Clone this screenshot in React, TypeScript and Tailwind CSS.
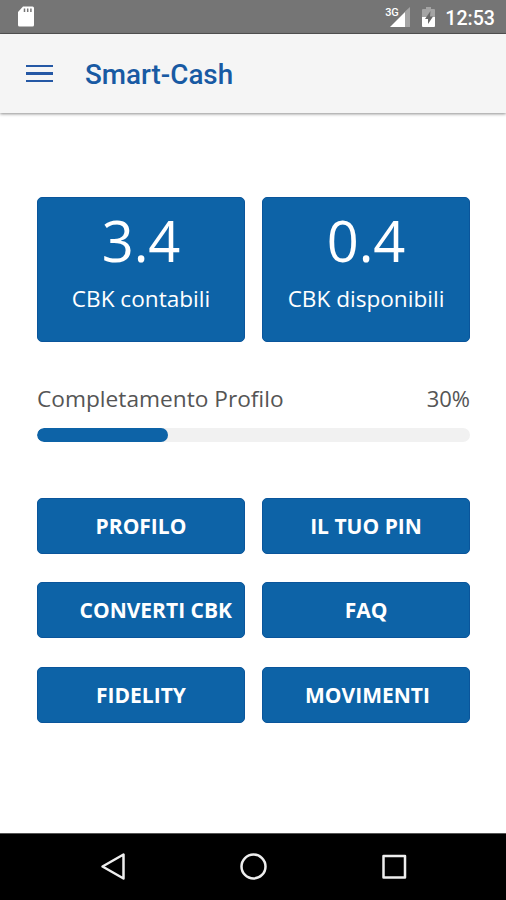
interface BalanceCardProps {
  value: string;
  label: string;
}

const BALANCES = [
  { value: '3.4', label: 'CBK contabili' },
  { value: '0.4', label: 'CBK disponibili' },
];

const ACTIONS = [
  { label: 'PROFILO', align: 'justify-center' },
  { label: 'IL TUO PIN', align: 'justify-center' },
  { label: 'CONVERTI CBK', align: 'justify-end pr-[12px]' },
  { label: 'FAQ', align: 'justify-center' },
  { label: 'FIDELITY', align: 'justify-center' },
  { label: 'MOVIMENTI', align: 'justify-center pl-[3px]' },
];

const StatusBar = () => (
  <div className="flex h-[34px] shrink-0 items-center justify-between border-b border-[#555] bg-[#757575] pl-[17px] pr-[11px] text-white">
    <svg width="18" height="21" viewBox="0 0 18 21">
      <path d="M6 0.5h9.5a1.5 1.5 0 0 1 1.5 1.5v17a1.5 1.5 0 0 1-1.5 1.5H2.5A1.5 1.5 0 0 1 1 19V6z" fill="#fff" />
      <path d="M7.5 2.5v3.5M10.7 2.5v3.5M13.9 2.5v3.5" stroke="#757575" strokeWidth="1.5" />
    </svg>
    <div className="flex items-center">
      <div className="relative mt-px h-[22px] w-[26px]">
        <svg width="26" height="22" viewBox="0 0 26 22">
          <path d="M20 5.5L25 1v20h-5z" fill="#a4a4a4" />
          <path d="M5 21L20 6v15z" fill="#fff" />
        </svg>
        <span className="absolute left-0 top-px font-['Roboto',sans-serif] text-[11px] font-medium leading-none tracking-tight">3G</span>
      </div>
      <svg className="ml-[10px] mt-px" width="15" height="22" viewBox="0 0 15 22">
        <path d="M5 1h5v2h3a1 1 0 0 1 1 1v7H1V4a1 1 0 0 1 1-1h3z" fill="#a4a4a4" />
        <path d="M1 11h13v9a1 1 0 0 1-1 1H2a1 1 0 0 1-1-1z" fill="#fff" />
        <path d="M9.5 5L4 13h3v5l5-7.5H9z" fill="#686868" />
      </svg>
      <span className="ml-[9px] mt-[4px] font-['Roboto',sans-serif] text-[19.6px] font-medium leading-none">12:53</span>
    </div>
  </div>
);

const AppHeader = () => (
  <header className="flex h-[79px] shrink-0 items-center bg-[#f5f5f5] pl-[26px] text-[#185aa3] shadow-[0_1px_3px_rgba(0,0,0,0.45)]">
    <button className="flex w-[27px] flex-col gap-[5px]" aria-label="Menu">
      <span className="h-[2.5px] bg-[#2558a5]" />
      <span className="h-[2.5px] bg-[#2558a5]" />
      <span className="h-[2.5px] bg-[#2558a5]" />
    </button>
    <h1 className="ml-[32px] mt-[3px] font-['Roboto',sans-serif] text-[27.8px] font-medium leading-none">Smart-Cash</h1>
  </header>
);

const BalanceCard = ({ value, label }: BalanceCardProps) => (
  <div className="flex h-[145px] flex-col items-center rounded-[5px] border border-[#0a559b] bg-[#0d63a7] text-white">
    <span className="mt-[12px] text-[56px] leading-[60px]">{value}</span>
    <span className="mt-[14px] text-[22.6px] leading-[30px]">{label}</span>
  </div>
);

const ProfileProgress = ({ percent }: { percent: number }) => (
  <div className="mt-[41px]">
    <div className="flex justify-between leading-[30px] text-[#555]">
      <span className="mt-px text-[22.7px]">Completamento Profilo</span>
      <span className="text-[22px]">{percent}%</span>
    </div>
    <div className="mt-[14px] h-[14px] overflow-hidden rounded-full bg-[#f1f1f1]">
      <div className="h-full rounded-full bg-[#0d63a7]" style={{ width: `${percent + 0.2}%` }} />
    </div>
  </div>
);

const NavBar = () => (
  <nav className="flex h-[67px] shrink-0 items-center justify-between border-t border-[#555] bg-black pl-[100px] pr-[98px]">
    <svg width="27" height="30" viewBox="0 0 27 30" fill="none" stroke="#eee" strokeWidth="2.5" strokeLinejoin="round">
      <path d="M23.5 2.5v24L2.5 14.5z" />
    </svg>
    <svg width="30" height="30" viewBox="0 0 30 30" fill="none" stroke="#eee" strokeWidth="2.5">
      <circle cx="14.5" cy="14.5" r="12" />
    </svg>
    <svg width="27" height="30" viewBox="0 0 27 30" fill="none" stroke="#eee" strokeWidth="2.5" strokeLinejoin="round">
      <rect x="2.5" y="4" width="21.5" height="21.5" />
    </svg>
  </nav>
);

export default function App() {
  return (
    <div className="flex h-[900px] w-[506px] flex-col overflow-hidden bg-white font-['Open_Sans',sans-serif]">
      <StatusBar />
      <AppHeader />
      <main className="flex-1 pl-[37px] pr-[36px] pt-[84px]">
        <div className="grid grid-cols-2 gap-x-[17px]">
          {BALANCES.map((item) => (
            <BalanceCard key={item.label} value={item.value} label={item.label} />
          ))}
        </div>
        <ProfileProgress percent={30} />
        <div className="mt-[56px] grid grid-cols-2 gap-x-[17px] gap-y-[28.4px]">
          {ACTIONS.map((action) => (
            <button
              key={action.label}
              className={`flex h-[56px] items-center rounded-[5px] border border-[#0a559b] bg-[#0d63a7] pt-px text-[21px] font-bold text-white ${action.align}`}
            >
              {action.label}
            </button>
          ))}
        </div>
      </main>
      <NavBar />
    </div>
  );
}
